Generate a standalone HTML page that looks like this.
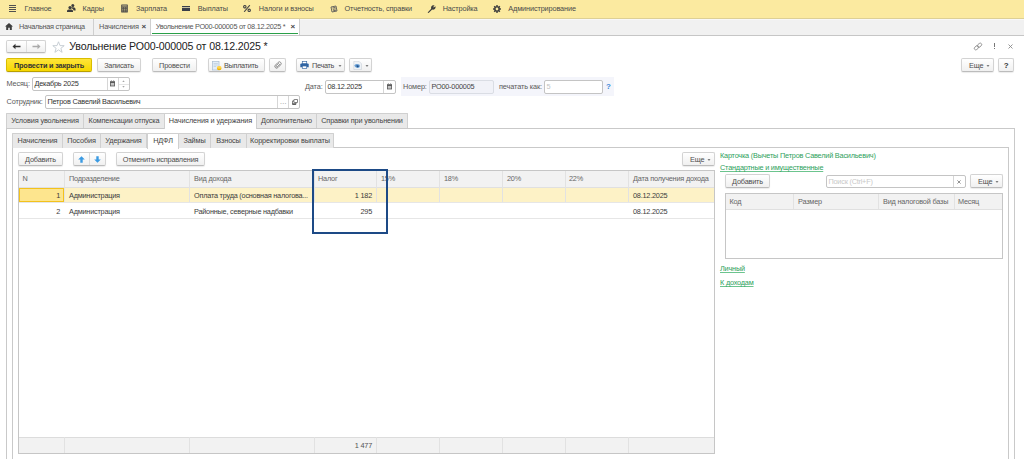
<!DOCTYPE html>
<html><head><meta charset="utf-8">
<style>
*{box-sizing:border-box;margin:0;padding:0}
html,body{width:1024px;height:459px;overflow:hidden;background:#fff}
body{position:relative;font-family:"Liberation Sans",sans-serif;font-size:7.3px;color:#4a4a4a;letter-spacing:-0.12px}
.a{position:absolute;white-space:nowrap}
.t{position:absolute;white-space:nowrap;line-height:10px}
/* menu */
#menu{position:absolute;left:0;top:0;width:1024px;height:19px;background:#fbeaa0;box-shadow:inset 0 -1px 0 #ddd096}
#tabs{position:absolute;left:0;top:19px;width:1024px;height:17px;background:#f1f1f1;border-bottom:1px solid #c6c6c6;box-shadow:inset 0 1px 0 #f8f8f8}
.btn{position:absolute;height:14px;border:1px solid #d3d3d3;border-bottom-color:#bcbcbc;border-radius:2px;background:linear-gradient(#ffffff,#f0f0f0);box-shadow:0 1px 1px rgba(0,0,0,0.08);color:#4d4d4d;text-align:center;line-height:13px;letter-spacing:-0.18px}
.fld{position:absolute;height:13px;border:1px solid #c4c4c4;border-radius:2px;background:#fff;line-height:12px;padding-left:1.5px;color:#333;letter-spacing:-0.22px}
.lbl{position:absolute;line-height:12px;color:#5a5a5a;white-space:nowrap}
.tab{position:absolute;height:15px;background:#e9e9e9;border:1px solid #d0d0d0;border-bottom:none;border-radius:1px 1px 0 0;line-height:13px;text-align:center;color:#444;white-space:nowrap}
.tab.act{background:#fff;height:16px;line-height:13px}
.hd{position:absolute;line-height:16px;color:#666;white-space:nowrap;letter-spacing:-0.2px}
.cell{position:absolute;line-height:15px;color:#3c3c3c;white-space:nowrap;letter-spacing:-0.22px}
.vl{position:absolute;width:1px;background:#e2e2e2}
.hl{position:absolute;height:1px;background:#e6e6e6}
.green{color:#2ea15c;letter-spacing:-0.2px}
.u{text-decoration:underline;text-decoration-skip-ink:none;text-decoration-color:#6cc48e}
</style></head><body>


<div id="menu">
 <svg class="a" style="left:9px;top:5px" width="8" height="8" viewBox="0 0 8 8" shape-rendering="crispEdges"><g fill="#505050"><rect x="0" y="0" width="7" height="1"/><rect x="0" y="2" width="7" height="1"/><rect x="0" y="4" width="7" height="1"/><rect x="0" y="6" width="7" height="1"/></g></svg>
 <div class="t" style="left:24.5px;top:3.6px">Главное</div>
 <svg class="a" style="left:67px;top:3.8px" width="9" height="8" viewBox="0 0 9 8"><g fill="#3d3d3d"><circle cx="5.8" cy="1.6" r="1.5"/><path d="M4.2 3.6 Q5.8 2.9 7.4 3.6 Q8.6 4.2 8.6 5.8 L8.6 6.6 L6.6 6.6 Q6.4 4.6 4.4 4.2Z"/><circle cx="3" cy="3.6" r="1.6"/><path d="M0 8 L0 7 Q0 5.4 1.6 5.4 L4.4 5.4 Q6 5.4 6 7 L6 8Z"/></g></svg>
 <div class="t" style="left:82.5px;top:3.6px">Кадры</div>
 <svg class="a" style="left:121px;top:4px" width="7" height="8.5" viewBox="0 0 7 9"><rect x="0" y="0.5" width="7" height="8.5" rx="0.6" fill="#4a4a4a"/><rect x="1" y="1.4" width="5" height="1.3" fill="#b8ad80"/><rect x="1.1" y="3.6" width="1.1" height="1" fill="#b8ad80"/><rect x="2.9" y="3.6" width="1.1" height="1" fill="#b8ad80"/><rect x="4.7" y="3.6" width="1.1" height="1" fill="#b8ad80"/><rect x="1.1" y="5.2" width="1.1" height="1" fill="#b8ad80"/><rect x="2.9" y="5.2" width="1.1" height="1" fill="#b8ad80"/><rect x="4.7" y="5.2" width="1.1" height="1" fill="#b8ad80"/><rect x="1.1" y="6.8" width="1.1" height="1" fill="#b8ad80"/><rect x="2.9" y="6.8" width="1.1" height="1" fill="#b8ad80"/><rect x="4.7" y="6.8" width="1.1" height="1" fill="#b8ad80"/></svg>
 <div class="t" style="left:136px;top:3.6px">Зарплата</div>
 <svg class="a" style="left:182px;top:6px" width="8" height="5" viewBox="0 0 8 5" shape-rendering="crispEdges"><rect x="0" y="0" width="8" height="5" fill="#3a3f4a"/><rect x="0" y="1" width="8" height="1" fill="#c9c1a0"/></svg>
 <div class="t" style="left:197.8px;top:3.6px">Выплаты</div>
 <svg class="a" style="left:243px;top:5px" width="8" height="7" viewBox="0 0 8 7"><g fill="none" stroke="#454545" stroke-width="1.1"><ellipse cx="1.8" cy="1.7" rx="1.2" ry="1.2"/><ellipse cx="6.2" cy="5.3" rx="1.2" ry="1.2"/><path d="M6.8 0.2 L1.2 6.8"/></g></svg>
 <div class="t" style="left:258.8px;top:3.6px">Налоги и взносы</div>
 <svg class="a" style="left:330px;top:5px" width="8" height="8" viewBox="0 0 8 8"><g fill="none" stroke="#5a5a5a" stroke-width="0.9"><path d="M1 2 L6 1 L7 6 L2 7Z"/><path d="M2.5 3 L5.5 2.4 M2.8 4.4 L5.8 3.8 M3.1 5.8 L6.1 5.2"/></g></svg>
 <div class="t" style="left:344.5px;top:3.6px">Отчетность, справки</div>
 <svg class="a" style="left:427px;top:5px" width="9" height="8" viewBox="0 0 9 8"><path d="M0.6 7.4 L4.2 3.8 Q3.6 1.6 5.2 0.6 Q6.4 -0.1 7.6 0.5 L6.2 1.9 L6.8 2.6 L8.4 1.3 Q8.9 2.8 8 3.8 Q6.8 5 5.2 4.6 L1.6 8Z" fill="#3d3d3d"/></svg>
 <div class="t" style="left:442.7px;top:3.6px">Настройка</div>
 <svg class="a" style="left:493px;top:5px" width="8" height="8" viewBox="0 0 8 8"><g fill="#3d3d3d"><circle cx="4" cy="4" r="2.8"/><rect x="3.3" y="0" width="1.4" height="8"/><rect x="0" y="3.3" width="8" height="1.4"/><rect x="3.3" y="0" width="1.4" height="8" transform="rotate(45 4 4)"/><rect x="3.3" y="0" width="1.4" height="8" transform="rotate(-45 4 4)"/></g><circle cx="4" cy="4" r="1.4" fill="#fbeaa0"/></svg>
 <div class="t" style="left:508.3px;top:3.6px">Администрирование</div>
</div>
<div id="tabs">
 <svg class="a" style="left:5px;top:4px" width="8" height="7" viewBox="0 0 8 7"><path d="M4 0 L8 3.6 L6.8 3.6 L6.8 7 L4.8 7 L4.8 4.8 L3.2 4.8 L3.2 7 L1.2 7 L1.2 3.6 L0 3.6Z" fill="#3d3d3d"/></svg>
 <div class="t" style="left:19px;top:3.4px;color:#555;letter-spacing:-0.26px">Начальная страница</div>
 <div class="a" style="left:93px;top:0;width:1px;height:16px;background:#cfcfcf"></div>
 <div class="t" style="left:99px;top:3.4px;color:#555">Начисления</div>
 <div class="t" style="left:141.5px;top:3.2px;color:#444;font-size:8px;font-weight:bold">×</div>
 <div class="a" style="left:150px;top:0;width:1px;height:16px;background:#cfcfcf"></div>
 <div class="a" style="left:151px;top:0;width:148px;height:16px;background:#fff"></div>
 <div class="a" style="left:152px;top:14px;width:146px;height:1.2px;background:#2aa048"></div>
 <div class="t" style="left:155.8px;top:3.4px;color:#555;letter-spacing:-0.28px">Увольнение РО00-000005 от 08.12.2025 *</div>
 <div class="t" style="left:290.5px;top:3.2px;color:#444;font-size:8px;font-weight:bold">×</div>
 <div class="a" style="left:299px;top:0;width:1px;height:16px;background:#cfcfcf"></div>
</div>


<!-- title row -->
<div class="btn" style="left:6px;top:40px;width:40px;height:13px;border-radius:2px"></div>
<div class="a" style="left:26px;top:41px;width:1px;height:11px;background:#dcdcdc"></div>
<svg class="a" style="left:12px;top:43px" width="9" height="7" viewBox="0 0 9 7"><path d="M0.5 3.5 L3.5 0.8 L3.5 2.8 L8.5 2.8 L8.5 4.2 L3.5 4.2 L3.5 6.2Z" fill="#333"/></svg>
<svg class="a" style="left:31.5px;top:43px" width="9" height="7" viewBox="0 0 9 7"><path d="M8.5 3.5 L5.5 0.8 L5.5 2.8 L0.5 2.8 L0.5 4.2 L5.5 4.2 L5.5 6.2Z" fill="#aaa"/></svg>
<svg class="a" style="left:51.5px;top:40.5px" width="13" height="12" viewBox="0 0 13 12"><path d="M6.5 0.8 L8 4.6 L12.2 4.7 L8.9 7.3 L10.1 11.3 L6.5 8.9 L2.9 11.3 L4.1 7.3 L0.8 4.7 L5 4.6Z" fill="#fff" stroke="#c2c9d0" stroke-width="0.9" stroke-linejoin="round"/></svg>
<div class="a" style="left:69.3px;top:39.3px;font-size:10.6px;line-height:14px;letter-spacing:-0.14px;color:#222">Увольнение РО00-000005 от 08.12.2025 *</div>
<svg class="a" style="left:973px;top:41.5px" width="10" height="9" viewBox="0 0 10 9"><g fill="none" stroke="#8c8c8c" stroke-width="0.85" transform="rotate(-40 5 4.5)"><rect x="0.6" y="3" width="5" height="3" rx="1.5"/><rect x="4.4" y="3" width="5" height="3" rx="1.5"/></g></svg>
<div class="a" style="left:993.6px;top:43px;width:1.1px;height:3.6px;background:#777"></div>
<div class="a" style="left:993.6px;top:47.6px;width:1.1px;height:1.3px;background:#777"></div>
<svg class="a" style="left:1008px;top:44px" width="5" height="5" viewBox="0 0 5 5"><path d="M0.5 0.5 L4.5 4.5 M4.5 0.5 L0.5 4.5" stroke="#8a8a8a" stroke-width="0.9"/></svg>

<!-- command bar -->
<div class="btn" style="left:6px;top:58px;width:86px;background:linear-gradient(#ffe53a,#f6d700);border-color:#d9bd00;border-bottom-color:#b9a000;color:#333;font-weight:bold">Провести и закрыть</div>
<div class="btn" style="left:97px;top:58px;width:44px">Записать</div>
<div class="btn" style="left:152px;top:58px;width:45px">Провести</div>
<div class="btn" style="left:208px;top:58px;width:57px;text-align:left;padding-left:15px;letter-spacing:-0.3px">Выплатить</div>
<svg class="a" style="left:211.5px;top:60.5px" width="10" height="10" viewBox="0 0 10 10"><rect x="0.5" y="0.5" width="6.5" height="8.5" fill="#e3edf7" stroke="#a9bdd0" stroke-width="0.7"/><path d="M1.6 2.5 H5.8 M1.6 4 H5.8 M1.6 5.5 H4.2" stroke="#b4c6d8" stroke-width="0.6"/><ellipse cx="7.2" cy="7.6" rx="2.3" ry="1.6" fill="#f0b400"/><ellipse cx="7.2" cy="6.4" rx="2.3" ry="1.3" fill="#ffd24a"/></svg>
<div class="btn" style="left:269px;top:58px;width:17px"></div>
<svg class="a" style="left:273.5px;top:60.5px" width="8" height="8" viewBox="0 0 9 9"><g fill="none" stroke="#7d7d7d" stroke-width="0.9" transform="rotate(45 4.5 4.5)"><rect x="2.5" y="0.3" width="4" height="8.4" rx="2"/><path d="M3.6 2.4 V6.4 Q3.6 7.3 4.5 7.3 Q5.4 7.3 5.4 6.4 V1.9"/></g></svg>
<div class="btn" style="left:296px;top:58px;width:49px;text-align:left;padding-left:15px;letter-spacing:-0.3px">Печать</div>
<svg class="a" style="left:299.5px;top:61px" width="9" height="8" viewBox="0 0 9 8"><rect x="2.3" y="0.4" width="4.4" height="2.4" fill="#fff" stroke="#3f6ea6" stroke-width="0.7"/><path d="M0.3 3.6 Q0.3 2.6 1.3 2.6 H7.7 Q8.7 2.6 8.7 3.6 V6.2 H0.3Z" fill="#2f64a3"/><rect x="2.3" y="5" width="4.4" height="2.6" fill="#fff" stroke="#3f6ea6" stroke-width="0.7"/></svg>
<svg class="a" style="left:337.5px;top:65px" width="4" height="2" viewBox="0 0 4 2"><path d="M0.5 0.2 H3.5 L2 1.8Z" fill="#555"/></svg>
<div class="btn" style="left:349px;top:58px;width:23px"></div>
<svg class="a" style="left:353px;top:60.5px" width="10" height="9" viewBox="0 0 10 9"><path d="M0.8 0.3 H6 L8.5 2.8 V8.5 H0.8Z" fill="#eef2f6" stroke="#c9d0d8" stroke-width="0.6"/><path d="M1.3 4.2 Q3.5 2.2 6.3 3.6 Q7.4 4.6 6.6 6.2 Q5 7.6 3 6.6 Q1.8 6 1.3 4.2Z" fill="#6aa0d6"/><path d="M3.2 4.6 Q4.8 3.8 6 5 Q5.4 6.4 4 6.2Z" fill="#1f4f86"/></svg>
<svg class="a" style="left:365px;top:65px" width="4" height="2" viewBox="0 0 4 2"><path d="M0.5 0.2 H3.5 L2 1.8Z" fill="#555"/></svg>
<div class="btn" style="left:961px;top:58px;width:33px;text-align:left;padding-left:7px">Еще</div>
<svg class="a" style="left:986px;top:65px" width="4" height="2" viewBox="0 0 4 2"><path d="M0.5 0.2 H3.5 L2 1.8Z" fill="#555"/></svg>
<div class="btn" style="left:998px;top:58px;width:16px;font-weight:bold;font-size:8px;color:#333">?</div>

<!-- month / employee -->
<div class="lbl" style="left:6.5px;top:78px">Месяц:</div>
<div class="fld" style="left:32px;top:77px;width:98px;height:14px">Декабрь 2025</div>
<div class="a" style="left:119px;top:84px;width:10px;height:1px;background:#e6e6e6"></div>
<div class="a" style="left:107px;top:78px;width:1px;height:12px;background:#d6d6d6"></div>
<div class="a" style="left:118px;top:78px;width:1px;height:12px;background:#d6d6d6"></div>
<svg class="a" style="left:110px;top:79.5px" width="5" height="7" viewBox="0 0 5 7"><rect x="0" y="1.2" width="5" height="5.2" fill="#5a5a5a"/><rect x="0.8" y="3" width="3.4" height="2.6" fill="#c4c4c4"/><rect x="0.9" y="0.3" width="0.8" height="1.2" fill="#777"/><rect x="3.3" y="0.3" width="0.8" height="1.2" fill="#777"/></svg>
<svg class="a" style="left:122px;top:80px" width="3" height="8" viewBox="0 0 3 8"><path d="M0.3 1.8 L1.5 0.5 L2.7 1.8Z M0.3 6.2 L1.5 7.5 L2.7 6.2Z" fill="#888"/></svg>
<div class="lbl" style="left:6.5px;top:96px">Сотрудник:</div>
<div class="fld" style="left:45px;top:95px;width:255px;height:14px">Петров Савелий Васильевич</div>
<div class="a" style="left:277px;top:96px;width:1px;height:12px;background:#d6d6d6"></div>
<div class="a" style="left:288px;top:96px;width:1px;height:12px;background:#d6d6d6"></div>
<div class="a" style="left:280px;top:97.5px;font-size:7px;line-height:8px;color:#888;letter-spacing:0.3px">...</div>
<svg class="a" style="left:291.5px;top:98.5px" width="6" height="6" viewBox="0 0 6 6"><rect x="1.9" y="0.4" width="3.7" height="3.2" rx="0.5" fill="#fff" stroke="#555" stroke-width="0.8"/><path d="M1.9 1.9 H0.6 V5.4 H3.9 V3.6" fill="none" stroke="#555" stroke-width="0.8"/><rect x="0.4" y="4.4" width="3.4" height="1.2" fill="#444"/></svg>

<!-- date group -->
<div class="lbl" style="left:305px;top:81px">Дата:</div>
<div class="fld" style="left:325px;top:80px;width:71px;height:14px">08.12.2025</div>
<div class="a" style="left:383px;top:81px;width:1px;height:12px;background:#d6d6d6"></div>
<svg class="a" style="left:387px;top:82.5px" width="5" height="7" viewBox="0 0 5 7"><rect x="0" y="1.2" width="5" height="5.2" fill="#5a5a5a"/><rect x="0.8" y="3" width="3.4" height="2.6" fill="#c4c4c4"/><rect x="0.9" y="0.3" width="0.8" height="1.2" fill="#777"/><rect x="3.3" y="0.3" width="0.8" height="1.2" fill="#777"/></svg>
<div class="a" style="left:401px;top:77px;width:213px;height:19px;background:#f4f5fb"></div>
<div class="lbl" style="left:403px;top:81px">Номер:</div>
<div class="fld" style="left:429px;top:80px;width:65px;height:14px;background:#f1f2f8;border-color:#dadde4;color:#444">РО00-000005</div>
<div class="lbl" style="left:499px;top:81px">печатать как:</div>
<div class="fld" style="left:544px;top:80px;width:59px;height:14px;color:#c4c4c4">5</div>
<div class="a" style="left:606px;top:81px;font-size:8px;line-height:12px;font-weight:bold;color:#3c8ad8">?</div>

<!-- outer tabs -->
<div class="a" style="left:6px;top:128px;width:1009px;height:331px;border:1px solid #c9c9c9;border-bottom:none"></div>
<div class="tab" style="left:6px;top:113px;width:78px">Условия увольнения</div>
<div class="tab" style="left:83px;top:113px;width:82px">Компенсации отпуска</div>
<div class="tab act" style="left:164px;top:113px;width:93px">Начисления и удержания</div>
<div class="tab" style="left:256px;top:113px;width:61px">Дополнительно</div>
<div class="tab" style="left:316px;top:113px;width:92px">Справки при увольнении</div>

<!-- inner tabs -->
<div class="a" style="left:12px;top:147px;width:997px;height:312px;border:1px solid #c9c9c9;border-bottom:none"></div>
<div class="tab" style="left:12px;top:133px;width:51px">Начисления</div>
<div class="tab" style="left:62px;top:133px;width:39px">Пособия</div>
<div class="tab" style="left:100px;top:133px;width:47px">Удержания</div>
<div class="tab act" style="left:147px;top:133px;width:32px">НДФЛ</div>
<div class="tab" style="left:178px;top:133px;width:33px">Займы</div>
<div class="tab" style="left:210px;top:133px;width:37px">Взносы</div>
<div class="tab" style="left:246px;top:133px;width:88px">Корректировки выплаты</div>

<!-- table toolbar -->
<div class="btn" style="left:18px;top:152px;width:45px">Добавить</div>
<div class="btn" style="left:73px;top:152px;width:33px"></div>
<div class="a" style="left:89px;top:153px;width:1px;height:12px;background:#dcdcdc"></div>
<svg class="a" style="left:78px;top:155.5px" width="7" height="7" viewBox="0 0 7 7"><path d="M3.5 0.2 L6.8 3.4 L4.7 3.4 L4.7 6.8 L2.3 6.8 L2.3 3.4 L0.2 3.4Z" fill="#3a9ae2"/></svg>
<svg class="a" style="left:93.5px;top:155.5px" width="7" height="7" viewBox="0 0 7 7"><path d="M3.5 6.8 L6.8 3.6 L4.7 3.6 L4.7 0.2 L2.3 0.2 L2.3 3.6 L0.2 3.6Z" fill="#3a9ae2"/></svg>
<div class="btn" style="left:116px;top:152px;width:89px">Отменить исправления</div>
<div class="btn" style="left:682px;top:152px;width:33px;text-align:left;padding-left:7px">Еще</div>
<svg class="a" style="left:707px;top:159px" width="4" height="2" viewBox="0 0 4 2"><path d="M0.5 0.2 H3.5 L2 1.8Z" fill="#555"/></svg>

<!-- main table -->
<div class="a" style="left:18px;top:170px;width:697px;height:284px;border:1px solid #c6c6c6;background:#fff"></div>
<div class="a" style="left:19px;top:171px;width:695px;height:17px;background:#f2f2f2;border-bottom:1px solid #e0e0e0"></div>
<div class="a" style="left:19px;top:188px;width:695px;height:14px;background:#fdf2c6"></div>
<div class="a" style="left:19px;top:188px;width:45px;height:14px;background:#fde58e;border:1px solid #f3c21c"></div>
<div class="hl" style="left:19px;top:202px;width:695px"></div>
<div class="hl" style="left:19px;top:218px;width:695px"></div>
<div class="a" style="left:19px;top:437px;width:695px;height:16px;background:#f2f2f2;border-top:1px solid #dcdcdc"></div>
<div class="vl" style="left:64px;top:171px;height:31px"></div>
<div class="vl" style="left:189px;top:171px;height:31px"></div>
<div class="vl" style="left:314px;top:171px;height:31px"></div>
<div class="vl" style="left:376px;top:171px;height:31px"></div>
<div class="vl" style="left:439px;top:171px;height:31px"></div>
<div class="vl" style="left:502px;top:171px;height:31px"></div>
<div class="vl" style="left:565px;top:171px;height:31px"></div>
<div class="vl" style="left:628px;top:171px;height:31px"></div>
<div class="vl" style="left:64px;top:437px;height:16px"></div>
<div class="vl" style="left:189px;top:437px;height:16px"></div>
<div class="vl" style="left:314px;top:437px;height:16px"></div>
<div class="vl" style="left:376px;top:437px;height:16px"></div>
<div class="vl" style="left:439px;top:437px;height:16px"></div>
<div class="vl" style="left:502px;top:437px;height:16px"></div>
<div class="vl" style="left:565px;top:437px;height:16px"></div>
<div class="vl" style="left:628px;top:437px;height:16px"></div>
<div class="hd" style="left:22.5px;top:171px">N</div>
<div class="hd" style="left:69px;top:171px">Подразделение</div>
<div class="hd" style="left:194px;top:171px">Вид дохода</div>
<div class="hd" style="left:318px;top:171px">Налог</div>
<div class="hd" style="left:381px;top:171px">15%</div>
<div class="hd" style="left:444px;top:171px">18%</div>
<div class="hd" style="left:507px;top:171px">20%</div>
<div class="hd" style="left:569px;top:171px">22%</div>
<div class="hd" style="left:633px;top:171px">Дата получения дохода</div>
<div class="cell" style="left:20px;top:188px;width:40px;text-align:right">1</div>
<div class="cell" style="left:69px;top:188px">Администрация</div>
<div class="cell" style="left:194px;top:188px">Оплата труда (основная налогова...</div>
<div class="cell" style="left:316px;top:188px;width:56px;text-align:right">1 182</div>
<div class="cell" style="left:633px;top:188px">08.12.2025</div>
<div class="cell" style="left:20px;top:203.5px;width:40px;text-align:right">2</div>
<div class="cell" style="left:69px;top:203.5px">Администрация</div>
<div class="cell" style="left:194px;top:203.5px">Районные, северные надбавки</div>
<div class="cell" style="left:316px;top:203.5px;width:56px;text-align:right">295</div>
<div class="cell" style="left:633px;top:203.5px">08.12.2025</div>
<div class="cell" style="left:316px;top:438px;width:56px;text-align:right;color:#555">1 477</div>
<div class="a" style="left:312px;top:169px;width:76px;height:65px;border:2px solid #1d4a86"></div>

<!-- right panel -->
<div class="a green" style="left:720px;top:150px;line-height:12px">Карточка (Вычеты Петров Савелий Васильевич)</div>
<div class="a green u" style="left:720px;top:161.8px;line-height:12px">Стандартные и имущественные</div>
<div class="btn" style="left:725px;top:174px;width:45px">Добавить</div>
<div class="fld" style="left:826px;top:175px;width:140px;height:13px;color:#c8c8c8">Поиск (Ctrl+F)</div>
<div class="a" style="left:953px;top:176px;width:1px;height:11px;background:#d6d6d6"></div>
<svg class="a" style="left:957px;top:179.5px" width="4" height="4" viewBox="0 0 4 4"><path d="M0.4 0.4 L3.6 3.6 M3.6 0.4 L0.4 3.6" stroke="#777" stroke-width="0.8"/></svg>
<div class="btn" style="left:970px;top:174px;width:33px;text-align:left;padding-left:7px">Еще</div>
<svg class="a" style="left:995px;top:181px" width="4" height="2" viewBox="0 0 4 2"><path d="M0.5 0.2 H3.5 L2 1.8Z" fill="#555"/></svg>
<div class="a" style="left:725px;top:193px;width:278px;height:66px;border:1px solid #c6c6c6;background:#fff"></div>
<div class="a" style="left:726px;top:194px;width:276px;height:16px;background:#f2f2f2;border-bottom:1px solid #e0e0e0"></div>
<div class="vl" style="left:793px;top:194px;height:15px"></div>
<div class="vl" style="left:878px;top:194px;height:15px"></div>
<div class="vl" style="left:954px;top:194px;height:15px"></div>
<div class="hd" style="left:729.5px;top:193.5px">Код</div>
<div class="hd" style="left:798px;top:193.5px">Размер</div>
<div class="hd" style="left:883px;top:193.5px">Вид налоговой базы</div>
<div class="hd" style="left:958px;top:193.5px">Месяц</div>
<div class="a green u" style="left:720px;top:262.5px;line-height:12px">Личный</div>
<div class="a green u" style="left:720px;top:277px;line-height:12px">К доходам</div>

</body></html>
